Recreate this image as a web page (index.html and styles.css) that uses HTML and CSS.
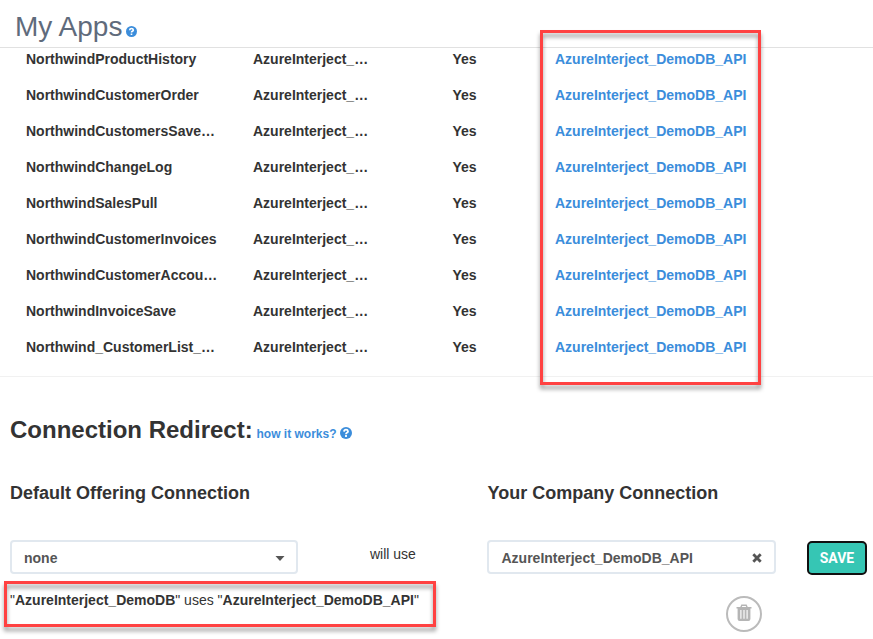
FILE: index.html
```html
<!DOCTYPE html>
<html lang="en">
<head>
<meta charset="utf-8">
<title>My Apps</title>
<link rel="stylesheet" href="styles.css">
</head>
<body>
<header class="page-header">
  <h1>My Apps</h1>
  <svg class="help" viewBox="0 0 12 12"><circle cx="6" cy="6" r="6"/><path d="M4 4.6Q4.2 2.7 6 2.7T8 4.4Q8 5.3 6.9 5.8Q6 6.3 6 7.2M6 8.1v1.8"/></svg>
</header>
<main>
  <section class="apps">
    <div class="row"><span>NorthwindProductHistory</span><span>AzureInterject_…</span><span>Yes</span><a>AzureInterject_DemoDB_API</a></div>
    <div class="row"><span>NorthwindCustomerOrder</span><span>AzureInterject_…</span><span>Yes</span><a>AzureInterject_DemoDB_API</a></div>
    <div class="row"><span>NorthwindCustomersSave…</span><span>AzureInterject_…</span><span>Yes</span><a>AzureInterject_DemoDB_API</a></div>
    <div class="row"><span>NorthwindChangeLog</span><span>AzureInterject_…</span><span>Yes</span><a>AzureInterject_DemoDB_API</a></div>
    <div class="row"><span>NorthwindSalesPull</span><span>AzureInterject_…</span><span>Yes</span><a>AzureInterject_DemoDB_API</a></div>
    <div class="row"><span>NorthwindCustomerInvoices</span><span>AzureInterject_…</span><span>Yes</span><a>AzureInterject_DemoDB_API</a></div>
    <div class="row"><span>NorthwindCustomerAccou…</span><span>AzureInterject_…</span><span>Yes</span><a>AzureInterject_DemoDB_API</a></div>
    <div class="row"><span>NorthwindInvoiceSave</span><span>AzureInterject_…</span><span>Yes</span><a>AzureInterject_DemoDB_API</a></div>
    <div class="row"><span>Northwind_CustomerList_…</span><span>AzureInterject_…</span><span>Yes</span><a>AzureInterject_DemoDB_API</a></div>
  </section>
  <section class="redirect">
    <div class="redirect-title">
      <h2>Connection Redirect:</h2>
      <a class="how">how it works?</a>
      <svg class="help" viewBox="0 0 12 12"><circle cx="6" cy="6" r="6"/><path d="M4 4.6Q4.2 2.7 6 2.7T8 4.4Q8 5.3 6.9 5.8Q6 6.3 6 7.2M6 8.1v1.8"/></svg>
    </div>
    <div class="form">
      <h3>Default Offering Connection</h3>
      <h3 class="company">Your Company Connection</h3>
      <div class="select"><span>none</span><svg class="caret" viewBox="0 0 10 5"><path d="M.5 0h9L5 5z"/></svg></div>
      <span class="will-use">will use</span>
      <div class="select chosen"><span>AzureInterject_DemoDB_API</span><svg class="clear" viewBox="0 0 10 10"><path d="M1.3 1.3l7.4 7.4M8.7 1.3L1.3 8.7"/></svg></div>
      <button class="save">SAVE</button>
    </div>
    <div class="mapping">
      <p>"<b>AzureInterject_DemoDB</b>" uses "<b>AzureInterject_DemoDB_API</b>"</p>
      <div class="trash"><svg viewBox="0 0 16 18"><path class="line" d="M4.8 3.5L5.8 1.2h4.4l1 2.3"/><path d="M.5 3h15v1.6H14.4V15q0 2-2 2H3.6q-2 0-2-2V4.6H.5z"/><path class="slots" d="M4.9 6v8.8M8 6v8.8M11.1 6v8.8"/></svg></div>
    </div>
  </section>
</main>
<div class="mark mark-column"></div>
<div class="mark mark-mapping"></div>
</body>
</html>
```

FILE: styles.css
```css
* { box-sizing: border-box; }
body {
  margin: 0;
  height: 639px;
  overflow: hidden;
  position: relative;
  background: #fff;
  color: #333;
  font: 14px/20px "Liberation Sans", Arial, sans-serif;
}
h1, h2, h3, p { margin: 0; }
a { color: #3b8ddb; }

.page-header {
  display: flex;
  height: 48px;
  padding: 7px 0 0 15px;
  border-bottom: 1px solid #e1e1e1;
}
h1 { font-size: 28px; line-height: 40px; font-weight: 400; color: #5f6b7c; width: 111px; white-space: nowrap; }
.help { width: 12px; height: 12px; fill: #3b8ddb; }
.help path { fill: none; stroke: #fff; stroke-width: 1.8; }
.page-header .help { width: 11px; height: 11px; margin-top: 19px; }

.apps {
  height: 329px;
  overflow: hidden;
  border-bottom: 1px solid #f1f1f1;
}
.row {
  display: grid;
  grid-template-columns: 227px 199.5px 102.5px 1fr;
  padding-left: 26px;
  height: 36px;
  line-height: 36px;
  font-weight: 700;
}
.row:first-child { margin-top: -7px; }

.redirect { padding-left: 10px; }
.redirect-title { display: flex; height: 76px; padding-top: 38px; }
h2 { font-size: 24px; line-height: 30px; width: 246.5px; white-space: nowrap; }
.how { font-size: 12px; font-weight: 700; line-height: 38px; width: 83.5px; white-space: nowrap; }
.redirect-title .help { margin-top: 12px; }

.form {
  display: grid;
  grid-template-columns: 288px 189px 289px 31px 60px;
  grid-template-rows: 87px 34px;
}
h3 { grid-column: 1 / 3; font-size: 18px; line-height: 24px; padding-top: 28px; }
.company { grid-column: 3 / 6; padding-left: .5px; }
.select {
  display: flex;
  justify-content: space-between;
  align-items: center;
  height: 34px;
  padding: 2px 11px 0 12px;
  border: 2px solid #e1e8ef;
  border-radius: 4px;
  color: #555;
  font-weight: 700;
}
.chosen { padding: 2px 12.5px 0 12.5px; }
.caret { width: 10px; height: 5px; fill: #555; }
.clear { width: 10px; height: 10px; fill: none; stroke: #555; stroke-width: 2.8; }
.will-use { padding: 4px 0 0 72px; }
.save {
  grid-column: 5;
  height: 34px;
  margin-top: 1px;
  padding: 0 0 1px;
  border: 2px solid #101010;
  border-radius: 5px;
  background: #36c6b4;
  color: #fff;
  font: 700 14px Roboto, "Liberation Sans", sans-serif;
}
.mapping { display: flex; height: 64px; }
.mapping p { width: 716px; padding-top: 16px; }
.trash {
  display: grid;
  place-items: center;
  width: 36px;
  height: 36px;
  margin-top: 22px;
  padding-bottom: 2px;
  border: 2px solid #bbb;
  border-radius: 50%;
}
.trash svg { width: 16px; height: 18px; fill: #b5b5b5; }
.trash .line { fill: none; stroke: #b5b5b5; stroke-width: 1.4; }
.trash .slots { stroke: #fff; stroke-width: 1.1; }

.mark { position: absolute; border: 3px solid #ff4242; filter: drop-shadow(0 4px 2px rgba(0, 0, 0, .4)); }
.mark-column { left: 540px; top: 30px; width: 221px; height: 355px; }
.mark-mapping { left: 4px; top: 581px; width: 432px; height: 46px; }
```
